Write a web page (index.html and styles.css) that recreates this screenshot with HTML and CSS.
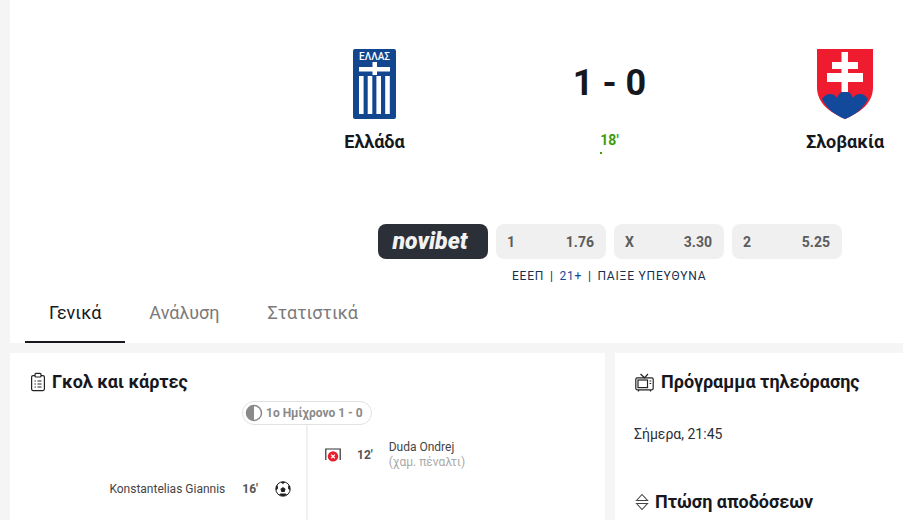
FILE: index.html
```html
<!DOCTYPE html>
<html lang="el">
<head>
  <meta charset="UTF-8">
  <meta name="viewport" content="width=device-width, initial-scale=1.0">
  <title>Ελλάδα - Σλοβακία</title>
  <link rel="stylesheet" href="styles.css">
</head>
<body>
  <div class="page">
    <section class="top-panel">
      <div class="match-head">
        <div class="team">
          <svg class="crest" width="43" height="70" viewBox="0 0 43 70">
            <rect width="43" height="70" rx="2" fill="#12478f"/>
            <text x="21.5" y="10.5" text-anchor="middle" class="crest-text">ΕΛΛΑΣ</text>
            <rect x="6" y="18" width="31" height="4.5" fill="#fff"/>
            <rect x="19.5" y="13" width="4.5" height="13" fill="#fff"/>
            <rect x="6" y="27" width="4.6" height="38" fill="#fff"/>
            <rect x="14.7" y="27" width="4.6" height="38" fill="#fff"/>
            <rect x="23.4" y="27" width="4.6" height="38" fill="#fff"/>
            <rect x="32.2" y="27" width="4.6" height="38" fill="#fff"/>
          </svg>
          <div class="team-name">Ελλάδα</div>
        </div>
        <div class="score-box">
          <div class="score">1 - 0</div>
          <div class="minute">18'</div>
          <div class="minute-dot"></div>
        </div>
        <div class="team team-away">
          <svg class="crest" width="56" height="70" viewBox="0 0 56 70">
            <path d="M0 0H56V38C56 54 44 63 28 70C12 63 0 54 0 38Z" fill="#ee1c2e"/>
            <path d="M5 50C8 46 10 45 13 45C16 45 18 46 20 49C22 44 25 42 28 42C31 42 34 44 36 49C38 46 40 45 43 45C46 45 48 46 51 50C46 60 38 66 28 70C18 66 10 60 5 50Z" fill="#12499b"/>
            <path d="M24.5 3H31V13H41V20H31V24H46V33H31V43H24.5V33H10V24H24.5V20H15V13H24.5Z" fill="#fff"/>
          </svg>
          <div class="team-name">Σλοβακία</div>
        </div>
      </div>

      <div class="odds-row">
        <div class="bookie"><span class="bookie-name">novibet</span></div>
        <div class="odd"><span>1</span><span>1.76</span></div>
        <div class="odd"><span>X</span><span>3.30</span></div>
        <div class="odd"><span>2</span><span>5.25</span></div>
      </div>
      <div class="disclaimer">ΕΕΕΠ <span class="sep">|</span> <span class="age">21+</span> <span class="sep">|</span> ΠΑΙΞΕ ΥΠΕΥΘΥΝΑ</div>

      <nav class="tabs">
        <div class="tab active">Γενικά</div>
        <div class="tab">Ανάλυση</div>
        <div class="tab">Στατιστικά</div>
      </nav>
    </section>

    <div class="columns">
      <section class="card card-main">
        <h2 class="card-title">
          <svg width="16" height="20" viewBox="0 0 16 20" fill="none" stroke="#222" stroke-width="1.2">
            <rect x="1.6" y="3.6" width="12.8" height="15" rx="1.5"/>
            <rect x="5" y="1.4" width="6" height="3.6" rx="1" fill="#fff"/>
            <path d="M4.5 9H5.8M7.5 9H11.5M4.5 12H5.8M7.5 12H11.5M4.5 15H5.8M7.5 15H11.5"/>
          </svg>
          Γκολ και κάρτες
        </h2>
        <div class="timeline">
          <div class="half-pill">
            <svg width="18" height="18" viewBox="0 0 18 18">
              <circle cx="9" cy="9" r="7.5" fill="none" stroke="#8a8a8a" stroke-width="1.5"/>
              <path d="M9 1.5A7.5 7.5 0 0 0 9 16.5Z" fill="#8a8a8a"/>
            </svg>
            1ο Ημίχρονο 1 - 0
          </div>
          <div class="event event-away">
            <svg width="16" height="14" viewBox="0 0 16 14">
              <path d="M.8 12V1H15.2V12" fill="none" stroke="#333" stroke-width="1.2"/>
              <circle cx="8" cy="8.4" r="5.2" fill="#e8202e"/>
              <path d="M6.2 6.6L9.8 10.2M9.8 6.6L6.2 10.2" stroke="#fff" stroke-width="1.3"/>
            </svg>
            <span class="event-min">12'</span>
            <div class="event-player">
              <div>Duda Ondrej</div>
              <div class="event-note">(χαμ. πέναλτι)</div>
            </div>
          </div>
          <div class="event event-home">
            <span class="event-player">Konstantelias Giannis</span>
            <span class="event-min">16'</span>
            <svg width="16" height="16" viewBox="0 0 16 16">
              <circle cx="8" cy="8" r="7.2" fill="#fff" stroke="#222" stroke-width="1"/>
              <path d="M8 6L10.6 8L9.6 11H6.4L5.4 8Z" fill="#222"/>
              <path d="M5.5 1.2L8 3L10.5 1.2L8 .6ZM1 5L1 9.4L3 7.4L2.8 4.6ZM15 5L15 9.4L13 7.4L13.2 4.6ZM4 13.4L6.4 15H9.6L12 13.4L10.4 12.6H5.6Z" fill="#222"/>
            </svg>
          </div>
        </div>
      </section>

      <aside class="card card-side">
        <h2 class="card-title">
          <svg width="19" height="19" viewBox="0 0 19 19" fill="none" stroke="#222" stroke-width="1.2">
            <rect x=".8" y="4.8" width="17.4" height="12" rx="1.5"/>
            <rect x="3" y="7" width="9.5" height="7.6"/>
            <path d="M5.5 1L9.5 4.8L13 1M14.5 8H16.2M14.5 10.5H16.2M3.5 17V18.4M15.5 17V18.4"/>
          </svg>
          Πρόγραμμα τηλεόρασης
        </h2>
        <div class="tv-time">Σήμερα, 21:45</div>
        <h2 class="card-title drop-title">
          <svg width="14" height="18" viewBox="0 0 14 18" fill="none" stroke="#444" stroke-width="1.1">
            <path d="M1.5 7.5L7 1.5L12.5 7.5ZM1.5 10.5L7 16.5L12.5 10.5Z"/>
          </svg>
          Πτώση αποδόσεων
        </h2>
      </aside>
    </div>
  </div>
</body>
</html>
```
FILE: styles.css
```css
html, body {
  margin: 0;
  padding: 0;
  height: 520px;
  overflow: hidden;
}

body {
  font-family: 'Roboto', 'Liberation Sans', sans-serif;
  background-color: #f5f5f5;
  color: #16181d;
}

.page {
  padding-left: 10px;
}

.top-panel {
  background-color: #fff;
  height: 343px;
  display: flex;
  flex-direction: column;
}

.match-head {
  display: grid;
  grid-template-columns: 235px 235px 1fr;
  padding: 49px 0 0 247px;
  height: 224px;
  box-sizing: border-box;
}

.team {
  display: flex;
  flex-direction: column;
  align-items: center;
}

.team-away {
  padding-left: 60px;
}

.crest {
  display: block;
}

.crest-text {
  font-family: 'Roboto', sans-serif;
  font-size: 10px;
  font-weight: 500;
  fill: #fff;
}

.team-name {
  font-size: 18px;
  font-weight: 700;
  line-height: 22px;
  margin-top: 12px;
}

.score-box {
  display: flex;
  flex-direction: column;
  align-items: center;
}

.score {
  font-size: 36px;
  font-weight: 700;
  line-height: 42px;
  margin-top: 13px;
}

.minute {
  font-size: 14px;
  font-weight: 700;
  line-height: 16px;
  color: #3f9a0c;
  margin-top: 28px;
}

.minute-dot {
  width: 2px;
  height: 2px;
  background-color: #3f9a0c;
  margin: 4px 18px 0 0;
}

.odds-row {
  display: flex;
  gap: 8px;
  padding-left: 368px;
}

.bookie {
  width: 110px;
  height: 35px;
  background-color: #2b2f38;
  border-radius: 8px;
  display: flex;
  align-items: center;
  justify-content: center;
}

.bookie-name {
  font-family: 'Roboto', sans-serif;
  font-size: 23px;
  font-weight: 900;
  font-style: italic;
  letter-spacing: 0;
  color: #f2f2f2;
  margin-right: 6px;
}

.odd {
  width: 110px;
  height: 35px;
  box-sizing: border-box;
  padding: 0 12px 0 11px;
  background-color: #f0f0f0;
  border-radius: 8px;
  display: flex;
  align-items: center;
  justify-content: space-between;
  font-size: 14px;
  font-weight: 700;
  color: #5c5c5c;
}

.disclaimer {
  margin-top: 10px;
  padding-left: 502px;
  font-size: 12px;
  line-height: 14px;
  letter-spacing: .8px;
  color: #16304f;
}

.sep {
  margin: 0 2px;
}

.age {
  color: #12499b;
}

.tabs {
  display: flex;
  margin-top: auto;
  padding-left: 15px;
}

.tab {
  padding: 0 24px;
  height: 50px;
  box-sizing: border-box;
  line-height: 40px;
  font-size: 18px;
  color: #7a7a7a;
}

.tab.active {
  color: #16181d;
  border-bottom: 2px solid #16181d;
}

.columns {
  display: flex;
  gap: 10px;
  margin-top: 10px;
}

.card {
  background-color: #fff;
  height: 167px;
  overflow: hidden;
}

.card-main {
  width: 595px;
}

.card-side {
  flex: 1;
}

.card-title {
  margin: 0;
  display: flex;
  align-items: center;
  gap: 7px;
  font-size: 18px;
  font-weight: 700;
  line-height: 22px;
}

.card-main .card-title {
  padding: 18px 0 0 20px;
  gap: 6px;
}

.card-side .card-title {
  padding: 18px 0 0 20px;
}

.card-side .drop-title {
  padding-top: 0;
  margin-top: 48px;
  gap: 6px;
}

.timeline {
  display: flex;
  flex-direction: column;
  margin: 8px 0 0 0;
  position: relative;
}

.timeline::before {
  content: "";
  position: absolute;
  left: 296px;
  top: 20px;
  bottom: -60px;
  width: 2px;
  background-color: #f0f0f0;
}

.half-pill {
  align-self: flex-start;
  margin-left: 232px;
  width: 130px;
  height: 24px;
  box-sizing: border-box;
  padding-left: 2px;
  border: 1px solid #e2e2e2;
  border-radius: 12px;
  background-color: #fff;
  display: flex;
  align-items: center;
  gap: 3px;
  font-size: 12px;
  font-weight: 700;
  color: #8a8a8a;
  position: relative;
}

.event {
  display: flex;
  align-items: center;
  font-size: 12px;
  color: #444;
}

.event-min {
  font-weight: 700;
  color: #555;
}

.event-away {
  padding-left: 315px;
  margin-top: 15px;
  gap: 16px;
}

.event-note {
  color: #aaa;
  margin-top: 1px;
}

.event-home {
  justify-content: flex-end;
  width: 281px;
  margin-top: 12px;
  gap: 17px;
}

.tv-time {
  padding: 32px 0 0 19px;
  font-size: 14px;
  line-height: 18px;
  color: #2b2f38;
}
```
